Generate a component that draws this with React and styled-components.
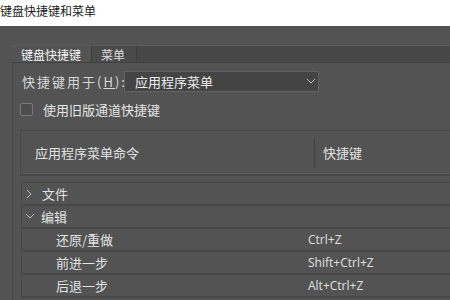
import React from 'react';
import styled, { createGlobalStyle } from 'styled-components';

const GlobalStyle = createGlobalStyle`
  html, body {
    margin: 0;
    padding: 0;
    background: #535353;
    font-family: "Noto Sans CJK SC", "Liberation Sans", sans-serif;
  }
  * { box-sizing: border-box; }
`;

const Window = styled.div`
  width: 450px;
  height: 300px;
  overflow: hidden;
  display: flex;
  flex-direction: column;
`;

const TitleBar = styled.div`
  height: 26px;
  flex: none;
  background: #ffffff;
  color: #1c1c1c;
  font-size: 12px;
  line-height: 22px;
`;

const Body = styled.div`
  flex: 1;
  background: #535353;
  padding-top: 19px;
  display: flex;
  flex-direction: column;
`;

const TabStrip = styled.div`
  margin-left: 12px;
  height: 18px;
  display: flex;
  background: #474747;
  border-top: 1px solid #5a5a5a;
  border-bottom: 1px solid #414141;
`;

const Tab = styled.div`
  width: ${p => p.$w}px;
  height: 100%;
  font-size: 12px;
  line-height: 17px;
  color: ${p => (p.$active ? '#f2f2f2' : '#dedede')};
  background: ${p => (p.$active ? '#535353' : '#4a4a4a')};
  padding-left: ${p => p.$pad}px;
  border-right: 1px solid #3f3f3f;
`;

const Content = styled.div`
  flex: 1;
  margin-left: 12px;
  border-left: 1px solid #474747;
  display: flex;
  flex-direction: column;
`;

const FormRow = styled.div`
  margin-top: 8px;
  height: 20px;
  display: flex;
  align-items: center;
`;

const Label = styled.div`
  width: 111px;
  padding-left: 9px;
  font-size: 13px;
  letter-spacing: 2px;
  color: #d8d8d8;
  white-space: nowrap;
  u { text-decoration-thickness: 1px; }
`;

const Select = styled.div`
  width: 195px;
  height: 21px;
  background: #444444;
  border: 1px solid #626262;
  display: flex;
  align-items: center;
  justify-content: space-between;
  padding: 0 2px 0 10px;
  font-size: 13px;
  color: #ececec;
`;

const CheckRow = styled.div`
  margin-top: 10px;
  height: 17px;
  display: flex;
  align-items: center;
  padding-left: 7px;
  gap: 10px;
  font-size: 13px;
  color: #e4e4e4;
`;

const Box = styled.span`
  width: 13px;
  height: 13px;
  border: 1px solid #7a7a7a;
  background: #4c4c4c;
  border-radius: 2px;
`;

const Header = styled.div`
  margin-top: 12px;
  margin-left: 7px;
  height: 46px;
  border-top: 1px solid #474747;
  border-left: 1px solid #474747;
  border-bottom: 2px solid #474747;
  box-shadow: inset 0 -1px 0 #5a5a5a;
  display: flex;
  align-items: center;
  font-size: 13px;
  color: #e2e2e2;
`;

const HeadCell = styled.div`
  width: ${p => p.$w || 'auto'};
  flex: ${p => (p.$w ? 'none' : 1)};
  padding-left: ${p => p.$pad}px;
  height: 30px;
  line-height: 30px;
  border-left: ${p => (p.$divider ? '1px solid #3e3e3e' : 'none')};
`;

const List = styled.div`
  margin-top: 6px;
  margin-left: 8px;
  border-left: 1px solid #474747;
  border-top: 1px solid #484848;
`;

const Row = styled.div`
  height: 23px;
  display: flex;
  align-items: center;
  border-bottom: 2px solid #474747;
  font-size: 13px;
  color: #e2e2e2;
`;

const Name = styled.div`
  width: 286px;
  flex: none;
  display: flex;
  align-items: center;
  padding-left: ${p => p.$indent}px;
`;

const Arrow = styled.span`
  width: 16px;
  display: inline-flex;
  align-items: center;
`;

const Keys = styled.div`
  font-family: "Open Sans", "Liberation Sans", sans-serif;
  font-size: 12px;
  color: #e0e0e0;
`;

const Chevron = ({ dir }) =>
  dir === 'down' ? (
    <svg width="10" height="7" viewBox="0 0 10 7">
      <polyline points="1,1 5,5 9,1" fill="none" stroke="#bdbdbd" strokeWidth="1" />
    </svg>
  ) : (
    <svg width="6" height="10" viewBox="0 0 6 10">
      <polyline points="1,1 5,5 1,9" fill="none" stroke="#bdbdbd" strokeWidth="1" />
    </svg>
  );

const rows = [
  { name: '文件', arrow: 'right', indent: 4 },
  { name: '编辑', arrow: 'down', indent: 3 },
  { name: '还原/重做', keys: 'Ctrl+Z', indent: 34 },
  { name: '前进一步', keys: 'Shift+Ctrl+Z', indent: 34 },
  { name: '后退一步', keys: 'Alt+Ctrl+Z', indent: 34 },
];

const App = () => (
  <Window>
    <GlobalStyle />
    <TitleBar>键盘快捷键和菜单</TitleBar>
    <Body>
      <TabStrip>
        <Tab $active $w={80} $pad={9}>键盘快捷键</Tab>
        <Tab $w={45} $pad={9}>菜单</Tab>
      </TabStrip>
      <Content>
        <FormRow>
          <Label>
            快捷键用于(<u>H</u>):
          </Label>
          <Select>
            <span>应用程序菜单</span>
            <Chevron dir="down" />
          </Select>
        </FormRow>
        <CheckRow>
          <Box />
          <span>使用旧版通道快捷键</span>
        </CheckRow>
        <Header>
          <HeadCell $w="293px" $pad={14}>应用程序菜单命令</HeadCell>
          <HeadCell $divider $pad={8}>快捷键</HeadCell>
        </Header>
        <List>
          {rows.map(r => (
            <Row key={r.name}>
              <Name $indent={r.indent}>
                {r.arrow && (
                  <Arrow>
                    <Chevron dir={r.arrow} />
                  </Arrow>
                )}
                {r.name}
              </Name>
              <Keys>{r.keys}</Keys>
            </Row>
          ))}
        </List>
      </Content>
    </Body>
  </Window>
);

export default App;
